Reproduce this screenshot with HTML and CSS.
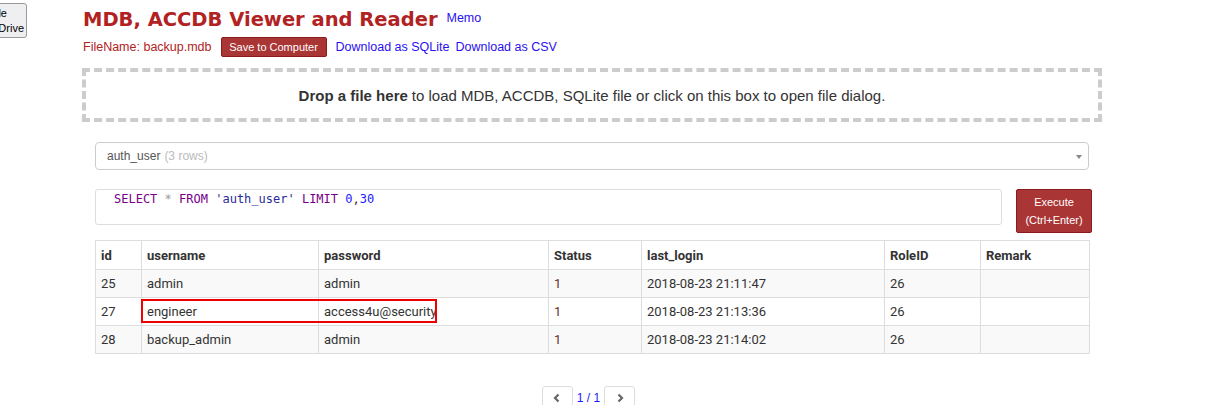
FILE: index.html
```html
<!DOCTYPE html>
<html>
<head>
<meta charset="utf-8">
<title>MDB, ACCDB Viewer and Reader</title>
<link rel="stylesheet" href="styles.css">
</head>
<body>
<button class="drive-btn"><span class="l1">Google</span><span class="l2">Drive</span></button>
<div class="page">
  <div class="title-row">
    <h1 class="title">MDB, ACCDB Viewer and Reader</h1>
    <a class="link memo" href="#">Memo</a>
  </div>
  <div class="file-row">
    <span class="filename">FileName: backup.mdb</span>
    <button class="btn-red save">Save to Computer</button>
    <a class="link" href="#">Download as SQLite</a>
    <a class="link" href="#">Download as CSV</a>
  </div>
  <div class="dropzone"><b>Drop a file here</b> to load MDB, ACCDB, SQLite file or click on this box to open file dialog.</div>
  <div class="content">
    <div class="select">
      <span class="sel-name">auth_user</span> <span class="sel-rows">(3 rows)</span>
      <span class="caret"></span>
    </div>
    <div class="query-row">
      <div class="code"><span class="kw">SELECT</span> <span class="op">*</span> <span class="kw">FROM</span> <span class="str">'auth_user'</span> <span class="kw">LIMIT</span> <span class="num">0</span><span class="punc">,</span><span class="num">30</span></div>
      <button class="btn-red exec">Execute<br>(Ctrl+Enter)</button>
    </div>
    <div class="table-wrap">
      <table class="grid">
        <colgroup>
          <col class="c-id"><col class="c-user"><col class="c-pass"><col class="c-status"><col class="c-login"><col class="c-role"><col class="c-remark">
        </colgroup>
        <thead>
          <tr><th>id</th><th>username</th><th>password</th><th>Status</th><th>last_login</th><th>RoleID</th><th>Remark</th></tr>
        </thead>
        <tbody>
          <tr><td>25</td><td>admin</td><td>admin</td><td class="st">1</td><td>2018-08-23 21:11:47</td><td>26</td><td></td></tr>
          <tr><td>27</td><td>engineer</td><td>access4u@security</td><td class="st">1</td><td>2018-08-23 21:13:36</td><td>26</td><td></td></tr>
          <tr><td>28</td><td>backup_admin</td><td>admin</td><td class="st">1</td><td>2018-08-23 21:14:02</td><td>26</td><td></td></tr>
        </tbody>
      </table>
      <div class="highlight"></div>
    </div>
    <div class="pager">
      <button class="pg-btn"><svg width="10" height="10" viewBox="0 0 10 10"><path d="M6.5 1.5 L3 5 L6.5 8.5" fill="none" stroke="#666" stroke-width="2.2"/></svg></button>
      <span class="pg-text">1 / 1</span>
      <button class="pg-btn"><svg width="10" height="10" viewBox="0 0 10 10"><path d="M3.5 1.5 L7 5 L3.5 8.5" fill="none" stroke="#666" stroke-width="2.2"/></svg></button>
    </div>
  </div>
</div>
</body>
</html>
```

FILE: styles.css
```css
html, body {
  margin: 0;
  padding: 0;
  background: #fff;
  font-family: "Liberation Sans", Arial, sans-serif;
  overflow: hidden;
}

.drive-btn {
  position: absolute;
  left: -40px;
  top: 3px;
  width: 67px;
  height: 35px;
  padding: 2px 2px 2px 0;
  background: #efeff2;
  border: 1px solid #999;
  border-radius: 3px;
  font-family: "Liberation Sans", Arial, sans-serif;
  font-size: 11px;
  line-height: 15px;
  color: #000;
  display: flex;
  flex-direction: column;
  align-items: flex-end;
  justify-content: center;
}
.drive-btn .l1 { padding-right: 17px; }

.page {
  padding: 6px 0 0 82px;
  width: 1020px;
}

.title-row {
  display: flex;
  align-items: baseline;
  gap: 9px;
  height: 28px;
  padding-left: 1px;
}
.title {
  margin: 0;
  font-family: "DejaVu Sans", Verdana, sans-serif;
  font-weight: bold;
  font-size: 19.5px;
  line-height: 28px;
  color: #b22222;
}
.link {
  color: #2a10f0;
  text-decoration: none;
  font-size: 12.5px;
}
.memo { position: relative; top: -4px; }

.file-row {
  display: flex;
  align-items: center;
  height: 20px;
  margin-top: 3px;
  padding-left: 1px;
  font-size: 12.5px;
}
.filename { color: #b22222; margin-right: 9px; }
.file-row .link { margin-right: 6px; }
.file-row .save { margin-right: 9px; }

.btn-red {
  background: #a93535;
  border: 1px solid #8a1c1c;
  border-radius: 2px;
  color: #fff;
  font-family: "Liberation Sans", Arial, sans-serif;
  font-size: 11px;
  padding: 0;
}
.save {
  width: 106px;
  height: 20px;
}

.dropzone {
  margin-top: 11px;
  height: 46px;
  border: 4px dashed #ccc;
  display: flex;
  align-items: center;
  justify-content: center;
  font-size: 15px;
  color: #333;
}
.dropzone b { margin-right: 4px; }

.content {
  padding: 0 13px;
}

.select {
  position: relative;
  margin-top: 20px;
  height: 26px;
  border: 1px solid #ccc;
  border-radius: 4px;
  display: flex;
  align-items: center;
  padding-left: 11px;
  font-size: 12px;
  gap: 4px;
}
.sel-name { color: #555; }
.sel-rows { color: #bbb; }
.caret {
  position: absolute;
  right: 6px;
  top: 12px;
  border-left: 3px solid transparent;
  border-right: 3px solid transparent;
  border-top: 4px solid #888;
}

.query-row {
  margin-top: 19px;
  display: flex;
  gap: 14px;
  width: 997px;
  align-items: flex-start;
}
.code {
  width: 888px;
  height: 32px;
  border: 1px solid #ddd;
  border-radius: 3px;
  padding: 2px 0 0 18px;
  font-family: "DejaVu Sans Mono", monospace;
  font-size: 12px;
  line-height: 15px;
  color: #000;
}
.kw { color: #770088; }
.op { color: #999; }
.str { color: #2a2a9a; }
.num { color: #1a1aff; }
.punc { color: #333; }

.exec {
  width: 76px;
  height: 44px;
  line-height: 18px;
}

.table-wrap {
  position: relative;
  margin-top: 7px;
  width: 994px;
}
.grid {
  border-collapse: collapse;
  width: 994px;
  table-layout: fixed;
  font-family: Roboto, "Liberation Sans", sans-serif;
  font-size: 13px;
  color: #333;
}
.c-id { width: 46px; }
.c-user { width: 177px; }
.c-pass { width: 230px; }
.c-status { width: 93px; }
.c-login { width: 243px; }
.c-role { width: 96px; }
.c-remark { width: 109px; }

.grid th, .grid td {
  border: 1px solid #ddd;
  text-align: left;
  padding: 0 5px;
  white-space: nowrap;
}
.grid th {
  height: 28px;
  font-weight: bold;
}
.grid td { height: 27px; }
.grid tbody tr:nth-child(odd) td { background: #f9f9f9; }
.grid td.st { color: #6b2f1f; }

.highlight {
  position: absolute;
  left: 46px;
  top: 59px;
  width: 292px;
  height: 20px;
  border: 2px solid #e00;
}

.pager {
  margin-top: 32px;
  display: flex;
  justify-content: center;
  align-items: flex-start;
  padding-right: 7px;
}
.pg-btn {
  width: 31px;
  height: 30px;
  background: #fff;
  border: 1px solid #ddd;
  border-radius: 3px;
  padding: 6px 0 0;
  display: flex;
  align-items: flex-start;
  justify-content: center;
}
.pg-text {
  color: #1a1aff;
  font-size: 12px;
  padding: 5px 4px 0;
}
```
